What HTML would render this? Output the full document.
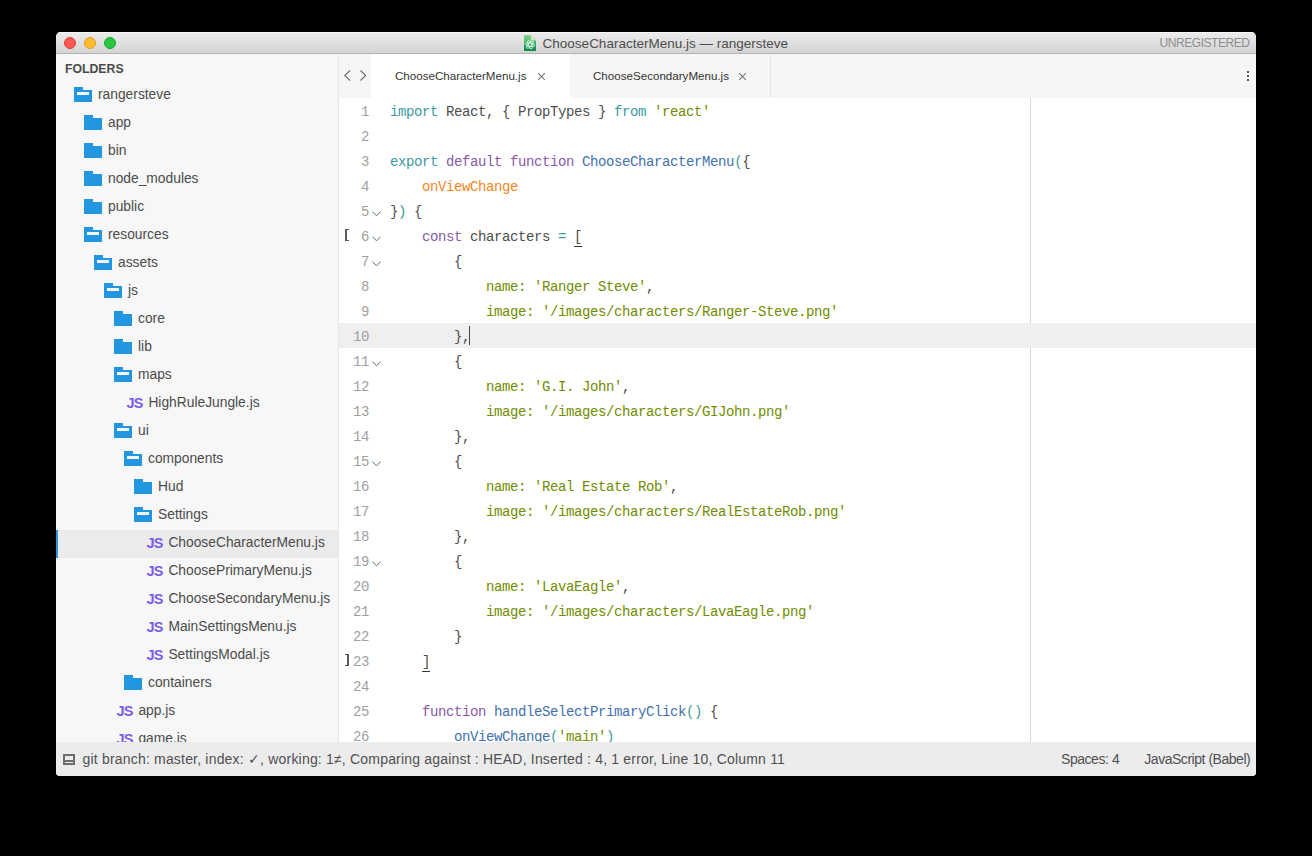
<!DOCTYPE html>
<html><head><meta charset="utf-8">
<style>
*{margin:0;padding:0;box-sizing:border-box}
html,body{width:1312px;height:856px;overflow:hidden;background:#000}
body{position:relative;font-family:"Liberation Sans",sans-serif}
.win{position:absolute;left:56px;top:32px;width:1200px;height:744px;background:#f7f7f7;border-radius:5px 5px 4px 4px;overflow:hidden}
.title{position:absolute;left:0;top:0;width:1200px;height:22px;background:linear-gradient(#ececec,#d4d4d4);border-bottom:1px solid #b4b4b4;box-shadow:inset 0 1px #f6f6f6}
.tl{position:absolute;top:5px;width:12px;height:12px;border-radius:50%}
.tl.r{left:8px;background:#fc5753;border:1px solid #de3f3b}
.tl.y{left:28px;background:#fdbb2f;border:1px solid #df9d1f}
.tl.g{left:48px;background:#28c63f;border:1px solid #17a92a}
.ttext{position:absolute;left:486.6px;top:3.5px;font-size:13.5px;line-height:16px;color:#4d4d4d;white-space:nowrap}
.unreg{position:absolute;right:6.5px;top:2.5px;font-size:12px;letter-spacing:-0.45px;line-height:16px;color:#8d8d8d;white-space:nowrap}
.ficon{position:absolute;left:468px;top:3px}
.side{position:absolute;left:0;top:22px;width:283px;height:688px;background:#f7f7f7;border-right:1px solid #e6e6e6;overflow:hidden}
.folders{position:absolute;left:8.9px;top:6.6px;font-size:12.3px;font-weight:bold;line-height:16px;color:#4a4a4a}
.row{position:absolute;left:0;width:282px;height:28px}
.row.sel{background:#ebebeb}
.row.sel:before{content:"";position:absolute;left:0;top:0;width:2px;height:28px;background:#2a93e2}
.nm{position:absolute;top:1.2px;font-size:13.8px;line-height:24px;color:#4b4b4b;white-space:nowrap}
.js{position:absolute;top:1.0px;font-size:14.5px;font-weight:bold;letter-spacing:-0.9px;line-height:24px;color:#7b5de6}
.fc,.fo{position:absolute;top:5px;width:18px;height:15px;background:#2396e1}
.fc:before,.fo:before{content:"";position:absolute;left:9px;top:0;width:9px;height:3px;background:#f7f7f7}
.sel .fc:before,.sel .fo:before{background:#ebebeb}
.fo:after{content:"";position:absolute;left:3px;top:5px;width:12px;height:3px;background:#f7f7f7}
.tabs{position:absolute;left:283px;top:22px;width:917px;height:44px;background:#f6f6f6}
.nav{position:absolute;top:16px}
.tab{position:absolute;top:0;height:44px}
.tab.act{left:32px;width:199px;background:#fff}
.tab.in{left:231px;width:201px;border-right:1px solid #e3e3e3}
.tabt{position:absolute;top:13.5px;font-size:11.6px;line-height:16px;color:#333;white-space:nowrap}
.x{position:absolute;top:19px}
.dots{position:absolute;left:908px;top:17px}
.dots i{display:block;width:2px;height:2px;background:#555;margin-bottom:2px}
.ed{position:absolute;left:283px;top:66px;width:917px;height:644px;background:#fff;overflow:hidden}
.ruler{position:absolute;left:691px;top:0;width:1px;height:644px;background:#d6d6d6}
.ln{position:absolute;left:0;width:917px;height:25px}
.ln.hl{background:#efefef}
.num{position:absolute;right:887px;top:2px;font-family:"Liberation Mono",monospace;font-size:14px;letter-spacing:-0.4px;line-height:25px;color:#a0a0a0;white-space:pre}
.code{position:absolute;left:51px;top:2px;font-family:"Liberation Mono",monospace;font-size:14px;letter-spacing:-0.4px;line-height:25px;color:#4d4d4c;white-space:pre}
.u{text-decoration:underline;text-underline-offset:4.5px;text-decoration-thickness:1.3px;text-decoration-color:#333}
.fold{position:absolute;left:33px;top:12.5px;width:9px;height:6px}
.gm{position:absolute;left:6px;width:4px;height:12px;border:1.5px solid #5a5a5a;border-left-width:2px}
.caret{position:absolute;left:130px;top:228px;width:1px;height:19px;background:#444;z-index:2}
.status{position:absolute;left:0;top:710px;width:1200px;height:34px;background:#ececec}
.stext{position:absolute;left:26.5px;top:9px;font-size:14px;letter-spacing:0.19px;line-height:16px;color:#505050;white-space:nowrap}
.sicon{position:absolute;left:7px;top:12px;width:12px;height:11px;border:2px solid #6d6d6d}
.sicon:after{content:"";position:absolute;left:0;top:4px;width:8px;height:2px;background:#6d6d6d}
</style></head><body>
<div class="win">
 <div class="title">
  <i class="tl r"></i><i class="tl y"></i><i class="tl g"></i>
  <svg class="ficon" width="12" height="16" viewBox="0 0 12 16"><defs><linearGradient id="gg" x1="0" y1="0" x2="0" y2="1"><stop offset="0" stop-color="#8ed48a"/><stop offset="0.5" stop-color="#3fb368"/><stop offset="1" stop-color="#0b8a48"/></linearGradient></defs><path d="M0 0H6.8L12 5.2V16H0Z" fill="url(#gg)"/><path d="M6.8 0V5.2H12Z" fill="#cdebc9"/><g fill="none" stroke="#fff" stroke-opacity="0.8" stroke-width="0.9"><ellipse cx="6" cy="9.6" rx="4.6" ry="1.7" transform="rotate(10 6 9.6)"/><ellipse cx="6" cy="9.6" rx="4.6" ry="1.7" transform="rotate(70 6 9.6)"/><ellipse cx="6" cy="9.6" rx="4.6" ry="1.7" transform="rotate(-50 6 9.6)"/></g></svg>
  <span class="ttext">ChooseCharacterMenu.js — rangersteve</span>
  <span class="unreg">UNREGISTERED</span>
 </div>
 <div class="side">
  <span class="folders">FOLDERS</span>
<div class="row" style="top:28px">
<i class="fo" style="left:18px"></i>
<span class="nm" style="left:42.0px">rangersteve</span></div>
<div class="row" style="top:56px">
<i class="fc" style="left:28px"></i>
<span class="nm" style="left:52.0px">app</span></div>
<div class="row" style="top:84px">
<i class="fc" style="left:28px"></i>
<span class="nm" style="left:52.0px">bin</span></div>
<div class="row" style="top:112px">
<i class="fc" style="left:28px"></i>
<span class="nm" style="left:52.0px">node_modules</span></div>
<div class="row" style="top:140px">
<i class="fc" style="left:28px"></i>
<span class="nm" style="left:52.0px">public</span></div>
<div class="row" style="top:168px">
<i class="fo" style="left:28px"></i>
<span class="nm" style="left:52.0px">resources</span></div>
<div class="row" style="top:196px">
<i class="fo" style="left:38px"></i>
<span class="nm" style="left:62.0px">assets</span></div>
<div class="row" style="top:224px">
<i class="fo" style="left:48px"></i>
<span class="nm" style="left:72.0px">js</span></div>
<div class="row" style="top:252px">
<i class="fc" style="left:58px"></i>
<span class="nm" style="left:82.0px">core</span></div>
<div class="row" style="top:280px">
<i class="fc" style="left:58px"></i>
<span class="nm" style="left:82.0px">lib</span></div>
<div class="row" style="top:308px">
<i class="fo" style="left:58px"></i>
<span class="nm" style="left:82.0px">maps</span></div>
<div class="row" style="top:336px">
<span class="js" style="left:70.6px">JS</span>
<span class="nm" style="left:92.4px">HighRuleJungle.js</span></div>
<div class="row" style="top:364px">
<i class="fo" style="left:58px"></i>
<span class="nm" style="left:82.0px">ui</span></div>
<div class="row" style="top:392px">
<i class="fo" style="left:68px"></i>
<span class="nm" style="left:92.0px">components</span></div>
<div class="row" style="top:420px">
<i class="fc" style="left:78px"></i>
<span class="nm" style="left:102.0px">Hud</span></div>
<div class="row" style="top:448px">
<i class="fo" style="left:78px"></i>
<span class="nm" style="left:102.0px">Settings</span></div>
<div class="row sel" style="top:476px">
<span class="js" style="left:90.6px">JS</span>
<span class="nm" style="left:112.4px">ChooseCharacterMenu.js</span></div>
<div class="row" style="top:504px">
<span class="js" style="left:90.6px">JS</span>
<span class="nm" style="left:112.4px">ChoosePrimaryMenu.js</span></div>
<div class="row" style="top:532px">
<span class="js" style="left:90.6px">JS</span>
<span class="nm" style="left:112.4px">ChooseSecondaryMenu.js</span></div>
<div class="row" style="top:560px">
<span class="js" style="left:90.6px">JS</span>
<span class="nm" style="left:112.4px">MainSettingsMenu.js</span></div>
<div class="row" style="top:588px">
<span class="js" style="left:90.6px">JS</span>
<span class="nm" style="left:112.4px">SettingsModal.js</span></div>
<div class="row" style="top:616px">
<i class="fc" style="left:68px"></i>
<span class="nm" style="left:92.0px">containers</span></div>
<div class="row" style="top:644px">
<span class="js" style="left:60.6px">JS</span>
<span class="nm" style="left:82.4px">app.js</span></div>
<div class="row" style="top:672px">
<span class="js" style="left:60.6px">JS</span>
<span class="nm" style="left:82.4px">game.js</span></div>
 </div>
 <div class="tabs">
  <svg class="nav" width="30" height="12" style="left:5px" viewBox="0 0 30 12"><path d="M6 0.5L0.8 5.5L6 10.5M16.5 0.5L21.7 5.5L16.5 10.5" fill="none" stroke="#6a6a6a" stroke-width="1.1"/></svg>
  <div class="tab act"><span class="tabt" style="left:24px">ChooseCharacterMenu.js</span><svg class="x" style="left:167px" width="7" height="7" viewBox="0 0 7 7"><path d="M0 0L7 7M7 0L0 7" stroke="#777" stroke-width="1.1"/></svg></div>
  <div class="tab in"><span class="tabt" style="left:23px">ChooseSecondaryMenu.js</span><svg class="x" style="left:169px" width="7" height="7" viewBox="0 0 7 7"><path d="M0 0L7 7M7 0L0 7" stroke="#777" stroke-width="1.1"/></svg></div>
  <div class="dots"><i></i><i></i><i></i></div>
 </div>
 <div class="ed">
  <div class="ruler"></div>
  <i class="caret"></i>
<div class="ln" style="top:0px"><span class="num">1</span><span class="code"><span style="color:#3e999f">import</span><span style="color:#4d4d4c"> React, { PropTypes } </span><span style="color:#3e999f">from</span><span style="color:#4d4d4c"> </span><span style="color:#718c00">&#x27;react&#x27;</span></span></div>
<div class="ln" style="top:25px"><span class="num">2</span><span class="code"></span></div>
<div class="ln" style="top:50px"><span class="num">3</span><span class="code"><span style="color:#3e999f">export</span><span style="color:#4d4d4c"> </span><span style="color:#8959a8">default</span><span style="color:#4d4d4c"> </span><span style="color:#8959a8">function</span><span style="color:#4d4d4c"> </span><span style="color:#4271ae">ChooseCharacterMenu</span><span style="color:#3e999f">(</span><span style="color:#4d4d4c">{</span></span></div>
<div class="ln" style="top:75px"><span class="num">4</span><span class="code"><span style="color:#4d4d4c">    </span><span style="color:#f5871f">onViewChange</span></span></div>
<div class="ln" style="top:100px"><span class="num">5</span><svg class="fold" viewBox="0 0 9 6"><path d="M0.4 0.6L4.5 4.8L8.6 0.6" fill="none" stroke="#666" stroke-width="1"/></svg><span class="code"><span style="color:#4d4d4c">}</span><span style="color:#3e999f">)</span><span style="color:#4d4d4c"> {</span></span></div>
<div class="ln" style="top:125px"><span class="num">6</span><svg class="fold" viewBox="0 0 9 6"><path d="M0.4 0.6L4.5 4.8L8.6 0.6" fill="none" stroke="#666" stroke-width="1"/></svg><span class="code"><span style="color:#4d4d4c">    </span><span style="color:#8959a8">const</span><span style="color:#4d4d4c"> characters </span><span style="color:#3e999f">=</span><span style="color:#4d4d4c"> </span><span style="color:#4d4d4c" class="u">[</span></span></div>
<div class="ln" style="top:150px"><span class="num">7</span><svg class="fold" viewBox="0 0 9 6"><path d="M0.4 0.6L4.5 4.8L8.6 0.6" fill="none" stroke="#666" stroke-width="1"/></svg><span class="code"><span style="color:#4d4d4c">        {</span></span></div>
<div class="ln" style="top:175px"><span class="num">8</span><span class="code"><span style="color:#4d4d4c">            </span><span style="color:#718c00">name: &#x27;Ranger Steve&#x27;</span><span style="color:#4d4d4c">,</span></span></div>
<div class="ln" style="top:200px"><span class="num">9</span><span class="code"><span style="color:#4d4d4c">            </span><span style="color:#718c00">image: &#x27;/images/characters/Ranger-Steve.png&#x27;</span></span></div>
<div class="ln hl" style="top:225px"><span class="num">10</span><span class="code"><span style="color:#4d4d4c">        },</span></span></div>
<div class="ln" style="top:250px"><span class="num">11</span><svg class="fold" viewBox="0 0 9 6"><path d="M0.4 0.6L4.5 4.8L8.6 0.6" fill="none" stroke="#666" stroke-width="1"/></svg><span class="code"><span style="color:#4d4d4c">        {</span></span></div>
<div class="ln" style="top:275px"><span class="num">12</span><span class="code"><span style="color:#4d4d4c">            </span><span style="color:#718c00">name: &#x27;G.I. John&#x27;</span><span style="color:#4d4d4c">,</span></span></div>
<div class="ln" style="top:300px"><span class="num">13</span><span class="code"><span style="color:#4d4d4c">            </span><span style="color:#718c00">image: &#x27;/images/characters/GIJohn.png&#x27;</span></span></div>
<div class="ln" style="top:325px"><span class="num">14</span><span class="code"><span style="color:#4d4d4c">        },</span></span></div>
<div class="ln" style="top:350px"><span class="num">15</span><svg class="fold" viewBox="0 0 9 6"><path d="M0.4 0.6L4.5 4.8L8.6 0.6" fill="none" stroke="#666" stroke-width="1"/></svg><span class="code"><span style="color:#4d4d4c">        {</span></span></div>
<div class="ln" style="top:375px"><span class="num">16</span><span class="code"><span style="color:#4d4d4c">            </span><span style="color:#718c00">name: &#x27;Real Estate Rob&#x27;</span><span style="color:#4d4d4c">,</span></span></div>
<div class="ln" style="top:400px"><span class="num">17</span><span class="code"><span style="color:#4d4d4c">            </span><span style="color:#718c00">image: &#x27;/images/characters/RealEstateRob.png&#x27;</span></span></div>
<div class="ln" style="top:425px"><span class="num">18</span><span class="code"><span style="color:#4d4d4c">        },</span></span></div>
<div class="ln" style="top:450px"><span class="num">19</span><svg class="fold" viewBox="0 0 9 6"><path d="M0.4 0.6L4.5 4.8L8.6 0.6" fill="none" stroke="#666" stroke-width="1"/></svg><span class="code"><span style="color:#4d4d4c">        {</span></span></div>
<div class="ln" style="top:475px"><span class="num">20</span><span class="code"><span style="color:#4d4d4c">            </span><span style="color:#718c00">name: &#x27;LavaEagle&#x27;</span><span style="color:#4d4d4c">,</span></span></div>
<div class="ln" style="top:500px"><span class="num">21</span><span class="code"><span style="color:#4d4d4c">            </span><span style="color:#718c00">image: &#x27;/images/characters/LavaEagle.png&#x27;</span></span></div>
<div class="ln" style="top:525px"><span class="num">22</span><span class="code"><span style="color:#4d4d4c">        }</span></span></div>
<div class="ln" style="top:550px"><span class="num">23</span><span class="code"><span style="color:#4d4d4c">    </span><span style="color:#4d4d4c" class="u">]</span></span></div>
<div class="ln" style="top:575px"><span class="num">24</span><span class="code"></span></div>
<div class="ln" style="top:600px"><span class="num">25</span><span class="code"><span style="color:#4d4d4c">    </span><span style="color:#8959a8">function</span><span style="color:#4d4d4c"> </span><span style="color:#4271ae">handleSelectPrimaryClick</span><span style="color:#3e999f">()</span><span style="color:#4d4d4c"> {</span></span></div>
<div class="ln" style="top:625px"><span class="num">26</span><span class="code"><span style="color:#4d4d4c">        </span><span style="color:#4271ae">onViewChange</span><span style="color:#3e999f">(</span><span style="color:#718c00">&#x27;main&#x27;</span><span style="color:#3e999f">)</span></span></div>
  <i class="gm" style="top:131px;border-right:0"></i>
  <i class="gm" style="top:556px;border-left:0;border-right-width:2px"></i>
 </div>
 <div class="status">
  <i class="sicon"></i>
  <span class="stext">git branch: master, index: ✓, working: 1≠, Comparing against : HEAD, Inserted : 4, 1 error, Line 10, Column 11</span>
  <span class="stext" style="left:1005px;letter-spacing:-0.45px">Spaces: 4</span>
  <span class="stext" style="left:1088.3px;letter-spacing:-0.47px">JavaScript (Babel)</span>
 </div>
</div>
</body></html>
